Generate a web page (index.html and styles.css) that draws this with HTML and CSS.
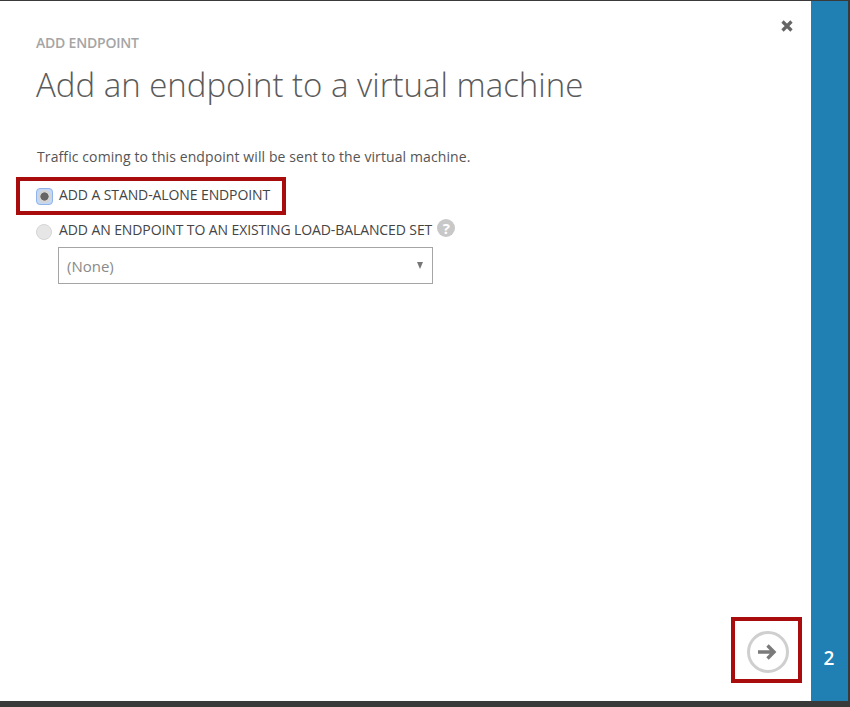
FILE: index.html
```
<!DOCTYPE html>
<html lang="en">
<head>
<meta charset="utf-8">
<title>Add endpoint</title>
<link rel="stylesheet" href="styles.css">
</head>
<body>
<div class="frame">
  <div class="main">
    <section class="panel">
      <button class="close" aria-label="Close">
        <svg width="14" height="14" viewBox="0 0 14 14"><path d="M2.5 2.5 L11.5 11.5 M11.5 2.5 L2.5 11.5" stroke="#666" stroke-width="3.2" fill="none"/></svg>
      </button>
      <p class="eyebrow">ADD ENDPOINT</p>
      <h1 class="title">Add an endpoint to a virtual machine</h1>
      <p class="intro">Traffic coming to this endpoint will be sent to the virtual machine.</p>
      <div class="option first">
        <span class="radio selected"><span class="dot"></span></span>
        <span class="label">ADD A STAND-ALONE ENDPOINT</span>
      </div>
      <div class="option second">
        <span class="radio"></span>
        <span class="label">ADD AN ENDPOINT TO AN EXISTING LOAD-BALANCED SET</span>
        <span class="help">?</span>
      </div>
      <div class="select">
        <span>(None)</span>
        <span class="caret"></span>
      </div>
      <div class="callout callout-option"></div>
      <div class="callout callout-next"></div>
      <button class="next" aria-label="Next">
        <svg width="42" height="42" viewBox="0 0 42 42">
          <circle cx="21" cy="21" r="19.5" fill="#fff" stroke="#cfcfcf" stroke-width="3"/>
          <path d="M11 21 H27 M20.5 14.5 L27 21 L20.5 27.5" stroke="#7a7a7a" stroke-width="3.4" fill="none"/>
        </svg>
      </button>
    </section>
    <aside class="rail"><span class="step">2</span></aside>
  </div>
</div>
</body>
</html>
```
FILE: styles.css
```
* { box-sizing: border-box; }
html, body { margin: 0; padding: 0; }
body { width: 850px; height: 707px; overflow: hidden; background: #fff; font-family: "Open Sans", "Noto Sans", sans-serif; }
.frame { height: 707px; display: flex; flex-direction: column; background: #3a3a3a; padding: 1px 2px 6px 0; }
.main { flex: 1; display: flex; min-height: 0; }
.panel { flex: 1; position: relative; background: #fff; padding: 33px 0 0 36px; }
.rail { width: 37px; background: #2180b3; display: flex; flex-direction: column; justify-content: flex-end; align-items: center; padding-bottom: 31px; }
.step { color: #fff; font-size: 19px; font-weight: 600; line-height: 24px; margin-left: -1px; }
.close { position: absolute; left: 780px; top: 18px; width: 14px; height: 14px; padding: 0; border: 0; background: none; display: block; }
.close svg { display: block; }
.eyebrow { margin: 0; font-size: 14px; font-weight: 600; line-height: 18px; color: #a5a5a5; letter-spacing: -0.2px; }
.title { margin: 11px 0 0; font-size: 33px; font-weight: 300; line-height: 44px; color: #5a5a5a; letter-spacing: 0; white-space: nowrap; }
.intro { margin: 40px 0 0 1px; font-size: 14px; line-height: 20px; color: #555; letter-spacing: 0.1px; }
.option { display: flex; align-items: center; height: 20px; white-space: nowrap; }
.first { margin-top: 18px; }
.second { margin-top: 15px; }
.radio { width: 16px; height: 16px; border-radius: 50%; background: #e6e6e6; border: 1px solid #d6d6d6; margin-right: 7px; flex: none; display: flex; align-items: center; justify-content: center; margin-top: 3px; }
.radio.selected { width: 17px; height: 17px; margin-right: 6px; border-radius: 4px; background: #c4d8f3; border: 1px solid #8fb4ea; }
.dot { width: 13px; height: 13px; border-radius: 50%; background: radial-gradient(circle closest-side, #666 0, #666 58%, #d4d4d4 68%, #d4d4d4 100%); }
.label { font-size: 14px; font-weight: 400; color: #444; letter-spacing: -0.1px; line-height: 20px; }
.help { width: 18px; height: 18px; border-radius: 50%; background: #c8c8c8; color: #fff; font-size: 15px; font-weight: 700; line-height: 18px; text-align: center; margin: -5px 0 0 5px; }
.select { width: 375px; height: 37px; margin: 7px 0 0 22px; border: 1px solid #a5a5a5; display: flex; align-items: center; justify-content: space-between; padding: 0 9px 0 8px; font-size: 15px; color: #8a8a8a; background: #fff; }
.caret { width: 0; height: 0; border-left: 3.5px solid transparent; border-right: 3.5px solid transparent; border-top: 7px solid #777; margin-top: -1px; }
.callout { position: absolute; border: 4px solid #a80c0c; pointer-events: none; }
.callout-option { left: 16px; top: 176px; width: 270px; height: 38px; }
.callout-next { left: 731px; top: 616px; width: 71px; height: 66px; }
.next { position: absolute; left: 747px; top: 630px; width: 42px; height: 42px; padding: 0; border: 0; background: none; }
.next svg { display: block; }
```
